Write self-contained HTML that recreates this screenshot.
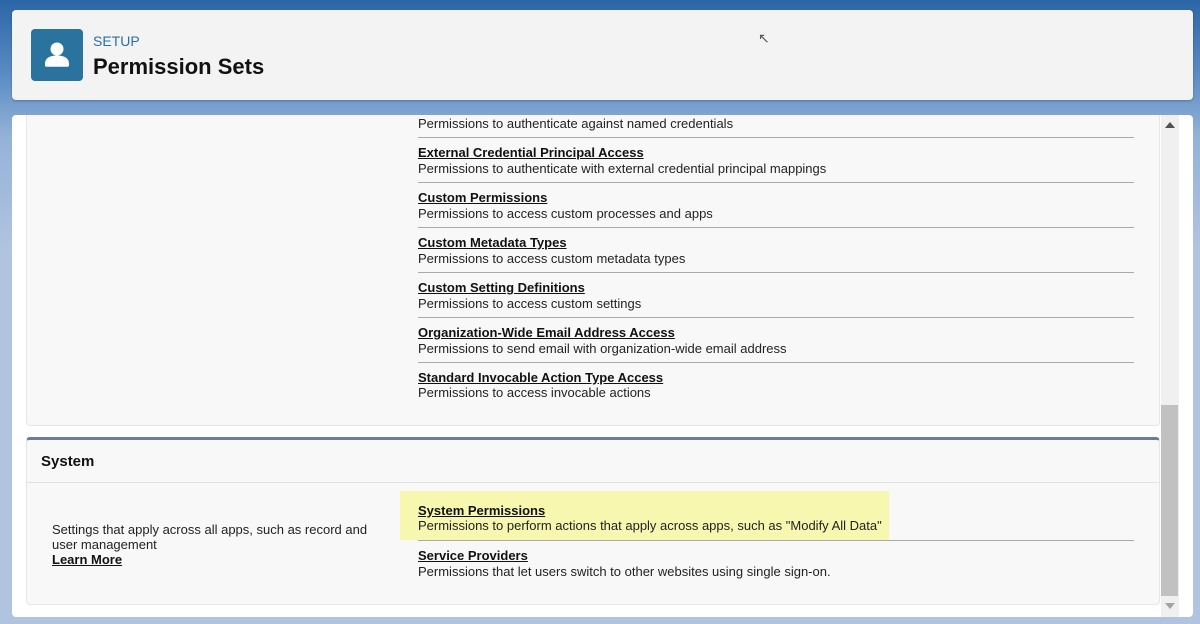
<!DOCTYPE html>
<html><head><style>
*{margin:0;padding:0;box-sizing:border-box}
body{width:1200px;height:624px;overflow:hidden;position:relative;font-family:"Liberation Sans",Arial,sans-serif;background:linear-gradient(180deg,#2c66a6 0%,#5a8cc4 12%,#94b2d8 22%,#b0c4df 40%,#b0c4df 100%)}
.abs{position:absolute}
.hdr{left:12px;top:10px;width:1181px;height:90px;background:#f3f3f3;border-radius:4px;box-shadow:0 1px 2px rgba(0,0,0,.25)}
.icon{left:31px;top:29px;width:52px;height:52px;background:#2a739e;border-radius:4px}
.card{left:12px;top:115px;width:1181px;height:502px;background:#fff;border-radius:4px}
.p1{left:26px;top:115px;width:1134px;height:311px;background:#f8f8f8;border:1px solid #e6e6e6;border-top:none;border-radius:0 0 4px 4px}
.p2{left:26px;top:437px;width:1134px;height:168px;background:#f8f8f8;border:1px solid #e6e6e6;border-top:3px solid #6e7c9b;border-radius:4px}
.t{font-size:13px;color:#222;white-space:nowrap;line-height:15px}
.l{font-size:13px;font-weight:bold;text-decoration:underline;color:#111;white-space:nowrap;line-height:15px}
.sep{left:418px;width:716px;height:1px;background:#aaa}
</style></head><body>
<div class="abs hdr"></div>
<div class="abs icon"><svg width="52" height="52" viewBox="0 0 52 52"><circle cx="26" cy="20" r="6.5" fill="#fff"/><path d="M14 35c0-6 5-8.5 12-8.5s12 2.5 12 8.5v1.5c0 .8-.7 1.2-1.5 1.2h-21c-.8 0-1.5-.4-1.5-1.2z" fill="#fff"/></svg></div>
<div class="abs" style="left:93px;top:33px;font-size:14px;color:#2a6fa8">SETUP</div>
<div class="abs" style="left:93px;top:54px;font-size:22px;font-weight:bold;color:#111">Permission Sets</div>
<div class="abs" style="left:758px;top:30px;font-size:14px;color:#555">&#8598;</div>
<div class="abs card"></div>
<div class="abs p1"></div>
<div class="abs t" style="left:418px;top:116px">Permissions to authenticate against named credentials</div>
<div class="abs sep" style="top:137px"></div>
<div class="abs l" style="left:418px;top:145px">External Credential Principal Access</div>
<div class="abs t" style="left:418px;top:161px">Permissions to authenticate with external credential principal mappings</div>
<div class="abs sep" style="top:182px"></div>
<div class="abs l" style="left:418px;top:190px">Custom Permissions</div>
<div class="abs t" style="left:418px;top:206px">Permissions to access custom processes and apps</div>
<div class="abs sep" style="top:227px"></div>
<div class="abs l" style="left:418px;top:235px">Custom Metadata Types</div>
<div class="abs t" style="left:418px;top:251px">Permissions to access custom metadata types</div>
<div class="abs sep" style="top:272px"></div>
<div class="abs l" style="left:418px;top:280px">Custom Setting Definitions</div>
<div class="abs t" style="left:418px;top:296px">Permissions to access custom settings</div>
<div class="abs sep" style="top:317px"></div>
<div class="abs l" style="left:418px;top:325px">Organization-Wide Email Address Access</div>
<div class="abs t" style="left:418px;top:341px">Permissions to send email with organization-wide email address</div>
<div class="abs sep" style="top:362px"></div>
<div class="abs l" style="left:418px;top:370px">Standard Invocable Action Type Access</div>
<div class="abs t" style="left:418px;top:385px">Permissions to access invocable actions</div>
<div class="abs p2"></div>
<div class="abs" style="left:27px;top:482px;width:1132px;height:1px;background:#e2e2e2"></div>
<div class="abs" style="left:41px;top:453px;font-size:15px;font-weight:bold;color:#111">System</div>
<div class="abs t" style="left:52px;top:522px;line-height:15px">Settings that apply across all apps, such as record and<br>user management</div>
<div class="abs l" style="left:52px;top:552px">Learn More</div>
<div class="abs" style="left:400px;top:491px;width:489px;height:49px;background:#f7f7b0"></div>
<div class="abs l" style="left:418px;top:503px">System Permissions</div>
<div class="abs t" style="left:418px;top:518px">Permissions to perform actions that apply across apps, such as "Modify All Data"</div>
<div class="abs sep" style="top:540px"></div>
<div class="abs l" style="left:418px;top:548px">Service Providers</div>
<div class="abs t" style="left:418px;top:564px">Permissions that let users switch to other websites using single sign-on.</div>
<div class="abs" style="left:1161px;top:115px;width:18px;height:502px;background:#f0f0f0"></div>
<div class="abs" style="left:1161px;top:405px;width:17px;height:191px;background:#c1c1c1"></div>
<div class="abs" style="left:1165px;top:122px;width:0;height:0;border-left:5px solid transparent;border-right:5px solid transparent;border-bottom:6px solid #505050"></div>
<div class="abs" style="left:1165px;top:603px;width:0;height:0;border-left:5px solid transparent;border-right:5px solid transparent;border-top:6px solid #a3a3a3"></div>
</body></html>
